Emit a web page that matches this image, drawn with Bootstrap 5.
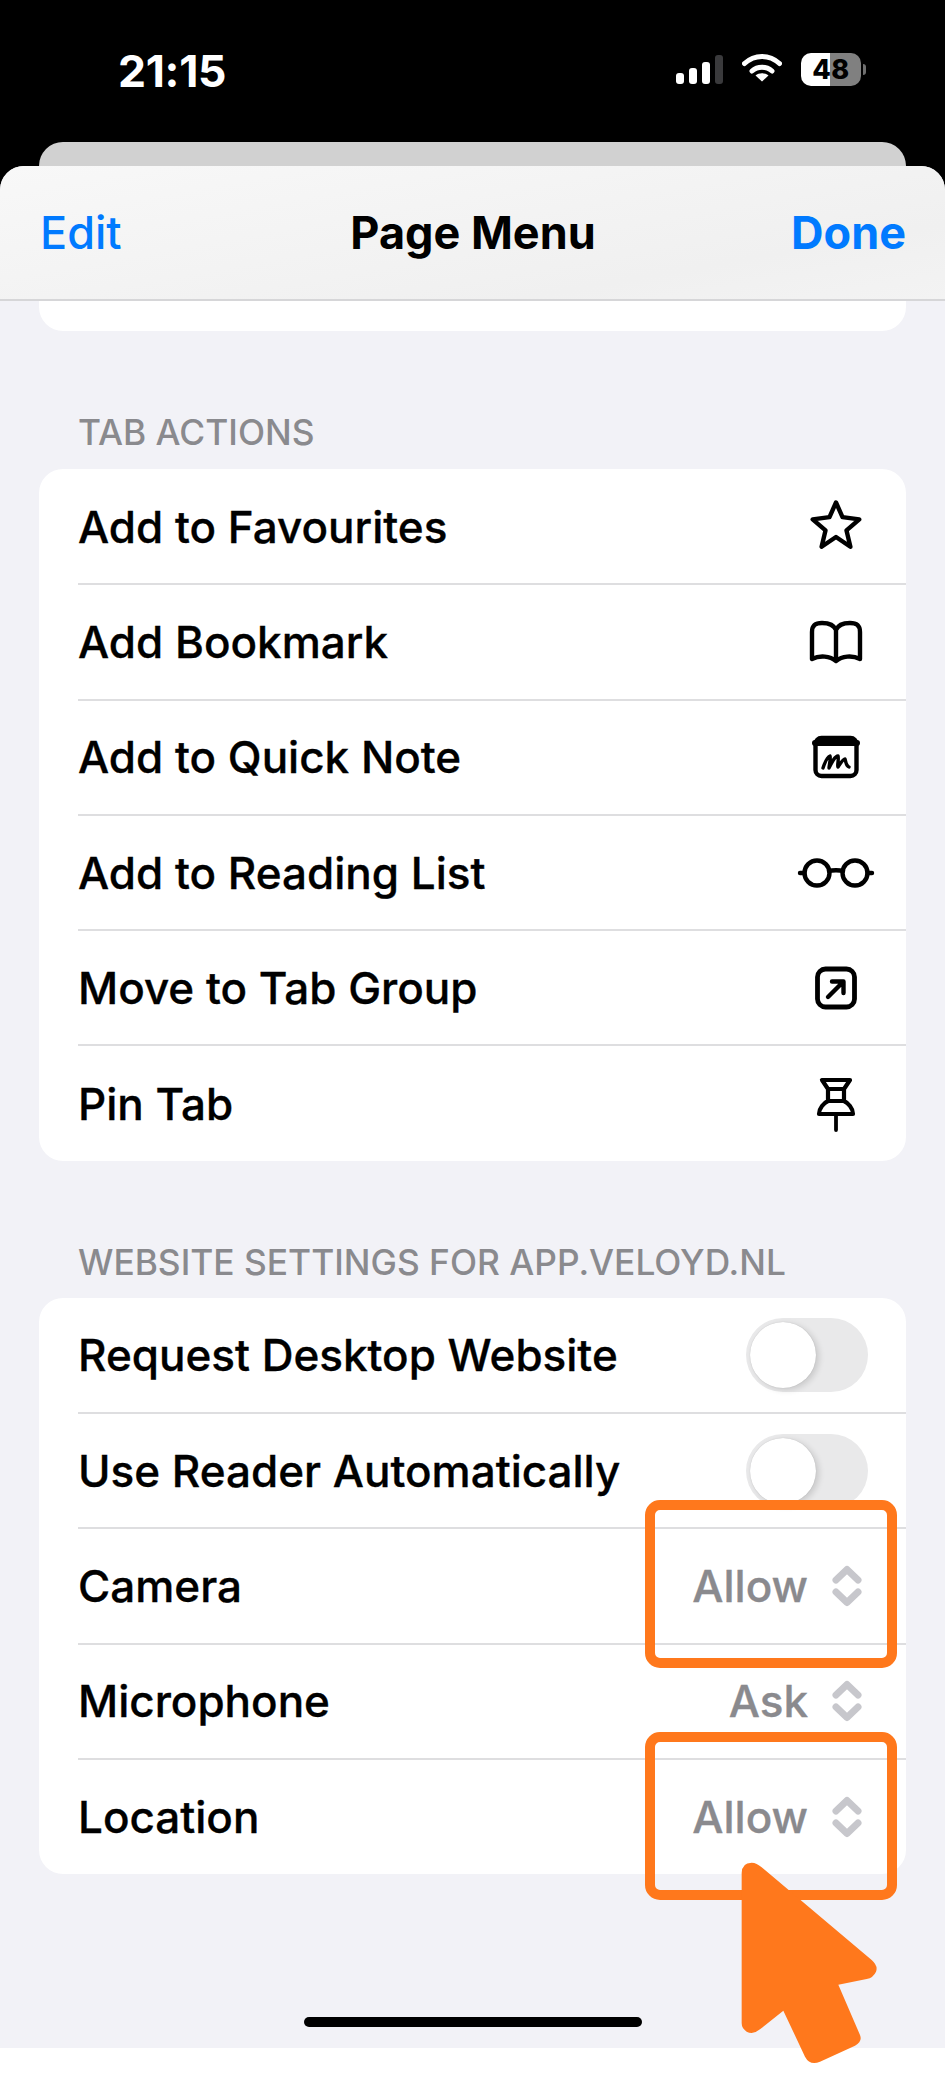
<!DOCTYPE html>
<html lang="en">
<head>
<meta charset="utf-8">
<title>Page Menu</title>
<link href="https://cdn.jsdelivr.net/npm/bootstrap@5.3.0/dist/css/bootstrap.min.css" rel="stylesheet">
<style>
html, body { height: 2083px; }
body { background: #000; font-family: Inter, "Liberation Sans", sans-serif; width: 945px; overflow: hidden; color: #000; }
.shot { width: 945px; height: 2083px; }
.status-zone { height: 142px; padding-left: 118px; padding-right: 79px; padding-top: 46px; align-items: flex-start; }
.clock { font-size: 44.5px; font-weight: 700; line-height: 50px; color: #fff; letter-spacing: -.3px; }
.status-icons { gap: 19px; margin-top: 7px; height: 33px; }
.bars { gap: 5px; height: 29px; margin-top: 2px; }
.bars i { display: block; width: 8px; background: #fff; border-radius: 3px; }
.bars i:nth-child(1) { height: 11px; }
.bars i:nth-child(2) { height: 16px; }
.bars i:nth-child(3) { height: 22px; }
.bars i:nth-child(4) { height: 29px; background: #3a3a3c; }
.batt { width: 60px; height: 33px; border-radius: 10px; background: linear-gradient(90deg, #fff 0 29px, #808080 29px); font-size: 27px; font-weight: 800; line-height: 33px; text-align: center; color: #000; letter-spacing: .5px; }
.batt-nub { width: 3px; height: 11px; background: #6f6f6f; border-radius: 0 3px 3px 0; margin-left: 2px; margin-top: 11px; }
.back-sheet { height: 24px; margin: 0 39px; background: #d1d1d1; border-radius: 24px 24px 0 0; }
.sheet { height: 1917px; background: #f2f2f7; border-radius: 24px 24px 0 0; overflow: hidden; }
.sheet-head { height: 135px; padding: 0 39px 0 40px; background: linear-gradient(170deg, #f8f8f8, #f0f0f0 75%, #f3f3f3); border-bottom: 2px solid #d6d6d8; }
.head-side { flex: 1 1 0; }
.sheet-head a { font-size: 45px; text-decoration: none; color: #007aff; line-height: 54px; }
.sheet-head .done-link { font-weight: 700; }
.sheet-head .edit-link { font-weight: 500; }
.sheet-title { font-size: 45px; font-weight: 700; line-height: 54px; }
.sheet-body { padding: 0 39px; }
.cut-card { height: 30px; background: #fff; border-radius: 0 0 24px 24px; }
.group-label { font-size: 35.3px; font-weight: 500; line-height: 40px; color: #8a8a8e; padding-left: 39px; margin: 0; }
.label-one { margin-top: 82px; margin-bottom: 16px; }
.label-two { margin-top: 82px; margin-bottom: 15px; }
.group-card { background: #fff; border-radius: 24px; border: 0; }
.group-card .list-group-item { padding: 0 0 0 39px; border: 0; background: transparent; color: #000; }
.row-in { height: 115.3px; padding-top: 1px; border-bottom: 1px solid #dedee0; box-shadow: 0 1px 0 #dedee0; font-size: 44px; font-weight: 500; line-height: 54px; -webkit-text-stroke: .35px #000; }
.list-group-item:last-child .row-in { border-bottom: 0; box-shadow: none; }
.ico-slot { width: 80px; height: 60px; margin-right: 30px; }
.ico-slot svg { display: block; fill: none; stroke: #000; stroke-width: 4.4; stroke-linejoin: round; stroke-linecap: round; }
.switch-off { width: 122px; height: 74px; border-radius: 37px; background: #e9e9ea; margin-right: 38px; padding: 4px; }
.switch-off span { display: block; width: 66px; height: 66px; border-radius: 50%; background: #fff; box-shadow: 3px 2px 6px rgba(0,0,0,.14), 0 0 1px rgba(0,0,0,.2); }
.picker { margin-right: 44px; color: #8a8a8e; gap: 24px; -webkit-text-stroke: .35px #8a8a8e; }
.picker svg { display: block; fill: none; stroke: #c7c7cc; stroke-width: 7; stroke-linecap: round; stroke-linejoin: round; }
.home-zone { padding-top: 143px; }
.home-bar { width: 338px; height: 10px; background: #000; border-radius: 5px; margin: 0 auto; }
.foot-white { height: 35px; background: #fff; }
.hl-box { position: absolute; left: 645px; width: 252px; height: 168px; border: 10px solid #ff781c; border-radius: 15px; }
.hl-one { top: 1500px; }
.hl-two { top: 1732px; }
.pointer-mark { position: absolute; left: 640px; top: 1680px; }
</style>
</head>
<body>
<div class="shot position-relative">
  <div class="status-zone d-flex justify-content-between">
    <div class="clock">21:15</div>
    <div class="status-icons d-flex align-items-start">
      <div class="bars d-flex align-items-end"><i></i><i></i><i></i><i></i></div>
      <svg width="40" height="29" viewBox="0 0 40 29" class="d-block"><path d="M2.5 10.5C12.5 1 27.5 1 37.5 10.5" fill="none" stroke="#fff" stroke-width="5" stroke-linecap="round"/><path d="M10 18C15.500 13 24.500 13 30 18" fill="none" stroke="#fff" stroke-width="5" stroke-linecap="round"/><path d="M20 28.500L13.500 22.500C17 19.500 23 19.500 26.500 22.500Z" fill="#fff"/></svg>
      <div class="d-flex">
        <div class="batt">48</div>
        <div class="batt-nub"></div>
      </div>
    </div>
  </div>
  <div class="back-sheet"></div>
  <div class="sheet d-flex flex-column">
    <div class="sheet-head d-flex flex-shrink-0 justify-content-between align-items-center">
      <div class="head-side"><a class="edit-link" href="#">Edit</a></div>
      <div class="sheet-title">Page Menu</div>
      <div class="head-side text-end"><a class="done-link" href="#">Done</a></div>
    </div>
    <div class="sheet-body flex-grow-1">
      <div class="cut-card"></div>
      <p class="group-label label-one">TAB ACTIONS</p>
      <div class="list-group group-card">
        <div class="list-group-item"><div class="row-in d-flex justify-content-between align-items-center"><span>Add to Favourites</span><div class="ico-slot"><svg width="80" height="60" viewBox="0 0 80 60"><path d="M40 5.500L46.500 20.100L63.300 22.400L50.500 33.400L54.400 49.800L40 40L25.600 49.800L29.500 33.400L16.700 22.400L33.500 20.100Z"/></svg></div></div></div>
        <div class="list-group-item"><div class="row-in d-flex justify-content-between align-items-center"><span>Add Bookmark</span><div class="ico-slot"><svg width="80" height="60" viewBox="0 0 80 60"><path d="M40 49C34 44 24 43 16 47V20C16 13 20 11 26 11C32 11 38 13 40 18C42 13 48 11 54 11C60 11 64 13 64 20V47C56 43 46 44 40 49ZM40 18V47"/></svg></div></div></div>
        <div class="list-group-item"><div class="row-in d-flex justify-content-between align-items-center"><span>Add to Quick Note</span><div class="ico-slot"><svg width="80" height="60" viewBox="0 0 80 60"><rect x="19.500" y="11" width="41" height="38" rx="6"/><path d="M19 16H61" stroke-width="6"/><path d="M27 41C29 35 31 30 34 29C35 32 33 38 33 41C36 35 39 29 42 29C43 33 41 38 42 40C44 37 47 32 49 32C50 35 50 39 53 40" stroke-width="3.400"/></svg></div></div></div>
        <div class="list-group-item"><div class="row-in d-flex justify-content-between align-items-center"><span>Add to Reading List</span><div class="ico-slot"><svg width="80" height="60" viewBox="0 0 80 60"><circle cx="21" cy="30" r="12.500"/><circle cx="59" cy="30" r="12.500"/><path d="M33 28C36 27 44 27 47 28M4 30H8.500M71.500 30H76"/></svg></div></div></div>
        <div class="list-group-item"><div class="row-in d-flex justify-content-between align-items-center"><span>Move to Tab Group</span><div class="ico-slot"><svg width="80" height="60" viewBox="0 0 80 60"><rect x="21.500" y="11" width="37" height="38" rx="8" stroke-width="4.800"/><path d="M32 39L47 24M36 23.500H47.500V35"/></svg></div></div></div>
        <div class="list-group-item"><div class="row-in d-flex justify-content-between align-items-center"><span>Pin Tab</span><div class="ico-slot"><svg width="80" height="60" viewBox="0 0 80 60"><path d="M26 6H54L48 15V27C52 29 57 34 57 40H23C23 34 28 29 32 27V15ZM32 15H48M32 27H48" stroke-width="4.200"/><path d="M40 41V56" stroke-width="3.800"/></svg></div></div></div>
      </div>
      <p class="group-label label-two">WEBSITE SETTINGS FOR APP.VELOYD.NL</p>
      <div class="list-group group-card">
        <div class="list-group-item"><div class="row-in d-flex justify-content-between align-items-center"><span>Request Desktop Website</span><div class="switch-off"><span></span></div></div></div>
        <div class="list-group-item"><div class="row-in d-flex justify-content-between align-items-center"><span>Use Reader Automatically</span><div class="switch-off"><span></span></div></div></div>
        <div class="list-group-item"><div class="row-in d-flex justify-content-between align-items-center"><span>Camera</span><div class="picker d-flex align-items-center"><span>Allow</span><svg width="30" height="42" viewBox="0 0 30 42"><path d="M4 15L15 4.500L26 15M4 27L15 37.500L26 27"/></svg></div></div></div>
        <div class="list-group-item"><div class="row-in d-flex justify-content-between align-items-center"><span>Microphone</span><div class="picker d-flex align-items-center"><span>Ask</span><svg width="30" height="42" viewBox="0 0 30 42"><path d="M4 15L15 4.500L26 15M4 27L15 37.500L26 27"/></svg></div></div></div>
        <div class="list-group-item"><div class="row-in d-flex justify-content-between align-items-center"><span>Location</span><div class="picker d-flex align-items-center"><span>Allow</span><svg width="30" height="42" viewBox="0 0 30 42"><path d="M4 15L15 4.500L26 15M4 27L15 37.500L26 27"/></svg></div></div></div>
      </div>
      <div class="home-zone"><div class="home-bar"></div></div>
    </div>
    <div class="foot-white flex-shrink-0"></div>
  </div>
  <div class="hl-box hl-one"></div>
  <div class="hl-box hl-two"></div>
  <svg class="pointer-mark" width="305" height="403" viewBox="0 0 915 1209"><path fill="#ff781c" d="M305 580Q305 548 335 548Q350 548 365 562L695 840Q715 858 708 875Q700 893 680 897L595 914L660 1065Q668 1085 645 1097L540 1145Q510 1158 495 1130L430 992L360 1048Q340 1065 320 1055Q305 1045 305 1030Z"/></svg>
</div>
<script src="https://cdn.jsdelivr.net/npm/bootstrap@5.3.0/dist/js/bootstrap.bundle.min.js"></script>
</body>
</html>
